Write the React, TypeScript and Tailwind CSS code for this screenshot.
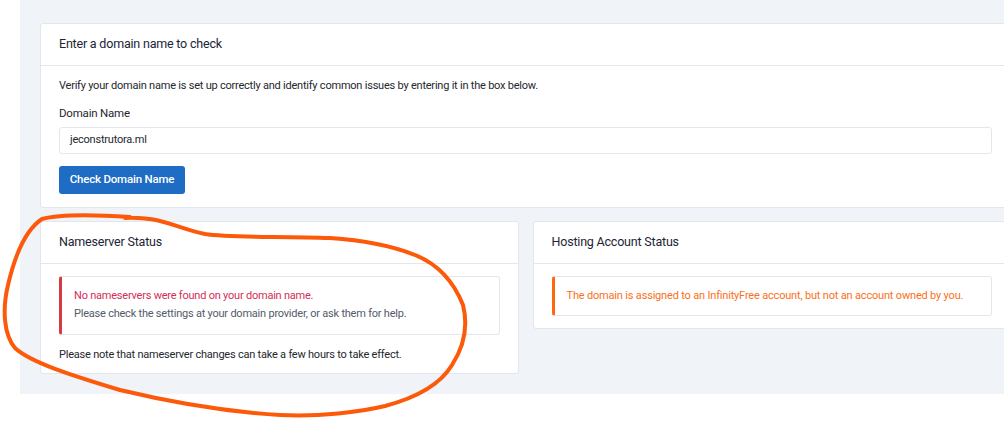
const font = { fontFamily: '"Segoe UI", Roboto, "Liberation Sans", sans-serif' };

const Card = ({ title, children, className = "" }: { title: string; children: React.ReactNode; className?: string }) => (
  <div className={`bg-white border border-[#e3e6eb] rounded-[3px] ${className}`}>
    <div className="h-[42px] px-[18px] flex items-center border-b border-[#e3e6eb]">
      <h3 className="text-[12.5px] tracking-[-0.2px] text-[#1b2536]">{title}</h3>
    </div>
    {children}
  </div>
);

export default function App() {
  return (
    <div className="relative w-[1004px] h-[421px] overflow-hidden bg-white" style={font}>
      <div className="ml-5 w-[1011px] bg-[#f0f3f8] pl-5 pt-[23px] pb-5">
        <div className="w-[971px] flex flex-col gap-[13px]">
          <Card title="Enter a domain name to check">
            <div className="px-[18px] pt-[11px] pb-[13px] text-[11px] tracking-[-0.22px] text-[#24272e]">
              <p className="leading-[18px]">Verify your domain name is set up correctly and identify common issues by entering it in the box below.</p>
              <label className="block mt-[9px] leading-[18px] text-[11.5px] tracking-[-0.2px] text-[#241f30]">Domain Name</label>
              <div className="mt-[5px] h-[27px] border border-[#e3e6eb] rounded-[3px] flex items-center px-[10px] text-[#24272e]">
                jeconstrutora.ml
              </div>
              <button className="mt-[12px] h-[28px] w-[126px] bg-[#1f6cc4] rounded-[3px] text-white font-medium text-[11.5px] tracking-[-0.2px]">
                Check Domain Name
              </button>
            </div>
          </Card>
          <div className="grid grid-cols-2 gap-[14px] items-start">
            <Card title="Nameserver Status">
              <div className="px-[18px] pt-[12px] pb-[9px] text-[11px] tracking-[-0.22px]">
                <div className="border border-[#e3e6eb] border-l-[3px] border-l-[#d63a45] rounded-[3px] pl-[12px] pr-3 pt-[10px] pb-[11px] leading-[18px]">
                  <p className="text-[#d42e57]">No nameservers were found on your domain name.</p>
                  <p className="text-[#535b69]">Please check the settings at your domain provider, or ask them for help.</p>
                </div>
                <p className="mt-[11px] leading-[18px] text-[#24272e]">Please note that nameserver changes can take a few hours to take effect.</p>
              </div>
            </Card>
            <Card title="Hosting Account Status">
              <div className="px-[18px] pt-[12px] pb-[12px] text-[11px] tracking-[-0.18px]">
                <div className="border border-[#e3e6eb] border-l-[3px] border-l-[#fd6a0a] rounded-[3px] pl-[12px] pr-3 h-[40px] flex items-center">
                  <p className="text-[#fb7020]">The domain is assigned to an InfinityFree account, but not an account owned by you.</p>
                </div>
              </div>
            </Card>
          </div>
        </div>
      </div>
      <svg className="absolute inset-0 pointer-events-none" width="1004" height="421" viewBox="0 0 1004 421">
        <path
          d="M 130 217 C 100 215, 60 214, 42 219 C 25 230, 15 255, 8 285 C 2 310, 4 335, 15 348 C 30 362, 70 375, 120 390 C 170 402, 230 412, 280 415 C 320 417, 360 412, 385 406 C 415 398, 440 385, 452 365 C 465 345, 468 325, 463 305 C 455 285, 440 265, 415 255 C 390 245, 360 240, 330 238 C 280 236, 230 238, 205 234 C 185 230, 170 222, 150 219 C 140 218, 132 217, 125 218"
          fill="none"
          stroke="#fc5a0a"
          strokeWidth="4"
          strokeLinecap="round"
          strokeLinejoin="round"
        />
      </svg>
    </div>
  );
}
